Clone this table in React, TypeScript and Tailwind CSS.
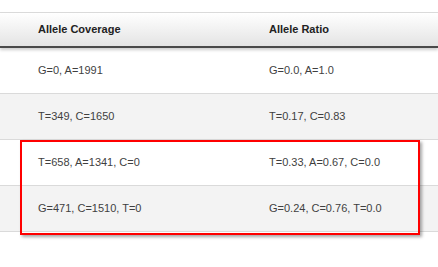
const ROWS = [
  { coverage: "G=0, A=1991", ratio: "G=0.0, A=1.0" },
  { coverage: "T=349, C=1650", ratio: "T=0.17, C=0.83" },
  { coverage: "T=658, A=1341, C=0", ratio: "T=0.33, A=0.67, C=0.0" },
  { coverage: "G=471, C=1510, T=0", ratio: "G=0.24, C=0.76, T=0.0" },
];

export default function App() {
  return (
    <div className="relative h-[267px] w-[438px] overflow-hidden bg-white font-['Liberation_Sans',Arial,sans-serif] text-[11px]">
      <div className="mt-[12px] border-t border-[#dcdcdc]">
        <div className="relative grid h-[35px] grid-cols-[231px_1fr] items-center border-b-2 border-[#4a4a4a] bg-gradient-to-b from-white to-[#e4e4e4] pl-[38px] pb-[1px] font-bold text-[#222] shadow-[0_2px_3px_rgba(0,0,0,0.2)]">
          <span>Allele Coverage</span>
          <span>Allele Ratio</span>
        </div>

        {ROWS.map((r, i) => (
          <div
            key={i}
            className={`grid h-[46px] grid-cols-[231px_1fr] items-center border-b border-[#dadada] pl-[38px] text-[#3f3f3f] ${
              i % 2 === 1 ? "bg-[#f3f3f3]" : "bg-white"
            }`}
          >
            <span>{r.coverage}</span>
            <span>{r.ratio}</span>
          </div>
        ))}
      </div>

      {/* highlight annotation */}
      <div className="absolute left-[20px] top-[140px] h-[95px] w-[400px] border-2 border-[#ff0000] shadow-[2px_2px_3px_rgba(0,0,0,0.35)]" />
    </div>
  );
}
